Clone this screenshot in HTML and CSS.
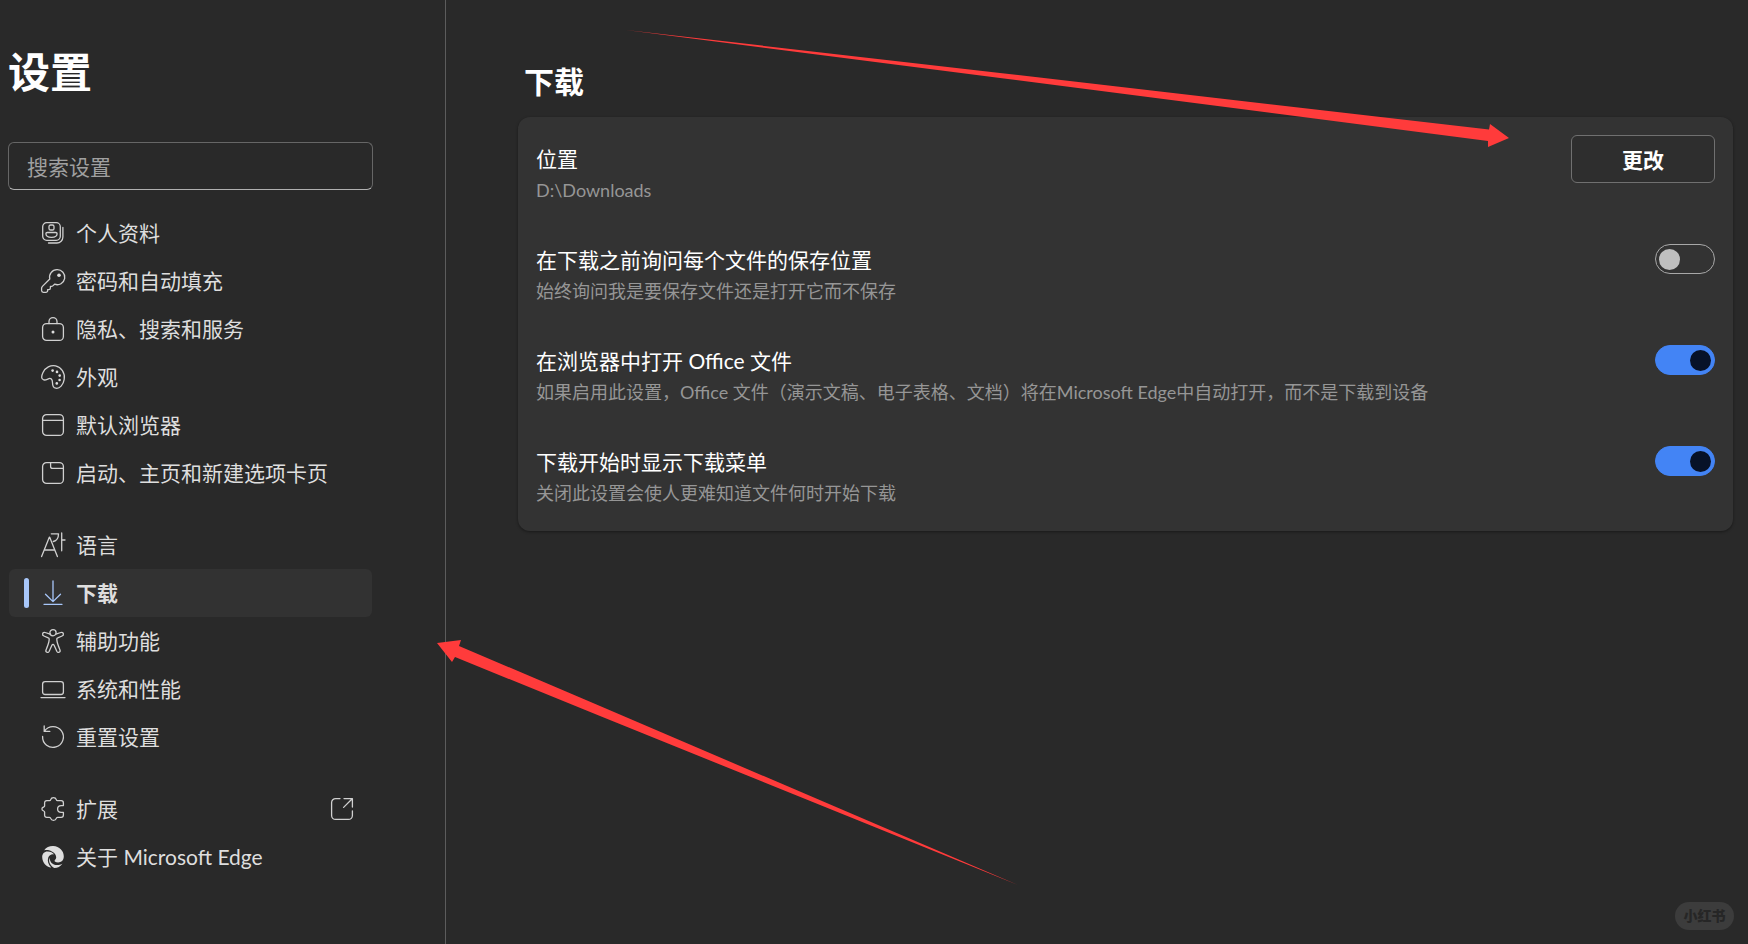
FILE: index.html
```html
<!DOCTYPE html>
<html lang="zh-CN">
<head>
  <meta charset="UTF-8" />
  <meta name="viewport" content="width=device-width, initial-scale=1.0" />
  <title>设置</title>
  <link rel="stylesheet" href="styles.css">
</head>
<body>
  <div class="layout">
    <aside class="sidebar">
      <h1>设置</h1>
      <input class="search" type="search" placeholder="搜索设置" aria-label="搜索设置" />

      <nav class="menu">
        <div class="menu-group">
          <a class="menu-item" href="#">
            <svg class="icon" viewBox="0 0 24 24"><rect x="1.7" y="1.7" width="17.6" height="17.6" rx="4"/><rect x="8" y="4" width="5" height="5" rx="1.6"/><path d="M6.2 11.5h8.6a1.3 1.3 0 0 1 1.3 1.3c0 2-2.2 3.500-5.600 3.500s-5.600-1.500-5.600-3.500a1.300 1.300 0 0 1 1.300-1.300z"/><path d="M21.900 6.500v9.500a6 6 0 0 1-6 6H7.500"/></svg>
            <span>个人资料</span>
          </a>
          <a class="menu-item" href="#">
            <svg class="icon" viewBox="0 0 24 24"><path d="M16 .7a7.400 7.400 0 0 0-7.200 9.300L1.400 17.400a2.500 2.500 0 0 0-.8 1.800v2.300c0 1 .8 1.800 1.800 1.800h2.500c1 0 1.700-.7 1.700-1.600v-1.100h1.200c.9 0 1.600-.7 1.600-1.600v-1.600h1.200c.5 0 .9-.2 1.200-.5l1.800-1.700A7.500 7.500 0 1 0 16 .7z"/><circle class="dot" cx="18" cy="6.200" r="1.800"/></svg>
            <span>密码和自动填充</span>
          </a>
          <a class="menu-item" href="#">
            <svg class="icon" viewBox="0 0 24 24"><rect x="1.600" y="6.600" width="20.800" height="16.800" rx="4"/><path d="M8 6.500V4.600a4 4 0 0 1 8 0v1.900"/><circle class="dot" cx="12" cy="15" r="1.500"/></svg>
            <span>隐私、搜索和服务</span>
          </a>
          <a class="menu-item" href="#">
            <svg class="icon" viewBox="0 0 24 24"><path d="M2 7.500C4.400 2.500 9.600-.1 14.600.9c5.600 1.200 9.700 7 8.600 13.400-.9 5.500-4.500 9.600-8.400 8.900-3.100-.5-3.300-3-3.300-5.500 0-3.300-1.600-5.200-4.200-3.900-1.700.8-2.800 1.500-4.600 1.100C-.1 14.300.3 10.900 2 7.500z"/><g class="dot"><circle cx="11.600" cy="5.600" r="1.300"/><circle cx="16" cy="6.900" r="1.300"/><circle cx="18.700" cy="10.600" r="1.300"/><circle cx="18.600" cy="15" r="1.300"/><circle cx="15.800" cy="18.400" r="1.300"/></g></svg>
            <span>外观</span>
          </a>
          <a class="menu-item" href="#">
            <svg class="icon" viewBox="0 0 24 24"><rect x="1.600" y="1.600" width="20.800" height="20.800" rx="4"/><path d="M1.600 7.400h20.800"/></svg>
            <span>默认浏览器</span>
          </a>
          <a class="menu-item" href="#">
            <svg class="icon" viewBox="0 0 24 24"><rect x="1.600" y="1.600" width="20.800" height="20.800" rx="4"/><path d="M9.600 1.600v3.800a2 2 0 0 0 2 2h10.800"/></svg>
            <span>启动、主页和新建选项卡页</span>
          </a>
        </div>

        <div class="menu-group">
          <a class="menu-item" href="#">
            <svg class="icon" viewBox="0 0 24 24"><path d="M.6 23.600 8.300 4.200h.4l7.700 19.400M3.300 17h10.400M10.300.8h7.200c0 4.600-1.500 7-5.200 7.700M20.700 0v17.800M20.700 7h3.300"/></svg>
            <span>语言</span>
          </a>
          <a class="menu-item active" href="#" aria-current="page">
            <svg class="icon" viewBox="0 0 24 24"><path d="M12 0v20.500M4.500 13.200l7.500 7.400 7.500-7.400M3 23.300h18"/></svg>
            <span>下载</span>
          </a>
          <a class="menu-item" href="#">
            <svg class="icon" viewBox="0 0 24 24"><circle cx="12" cy="3.700" r="3.100"/><path d="M9.200 5.200 4.100 3.500c-2.600-.8-3.500 2.600-1.200 3.500l4.400 1.800c.8.300 1 .8.900 1.600-.2 3.600-1.800 7.300-3.100 10.300-1.100 2.500 2 3.800 3.100 1.500l2.700-6c.5-1 1.700-1 2.200 0l2.700 6c1.100 2.300 4.200 1 3.100-1.500-1.300-3-2.900-6.700-3.100-10.300-.1-.8.100-1.300.9-1.600L21.100 7c2.300-.9 1.400-4.300-1.200-3.500l-5.100 1.700"/></svg>
            <span>辅助功能</span>
          </a>
          <a class="menu-item" href="#">
            <svg class="icon" viewBox="0 0 24 24"><rect x="1.600" y="4.700" width="20.800" height="12.800" rx="2.500"/><path d="M0 20.600h24"/></svg>
            <span>系统和性能</span>
          </a>
          <a class="menu-item" href="#">
            <svg class="icon" viewBox="0 0 24 24"><path d="M1.600 11.500A10.400 10.400 0 1 0 3.500 6M3.200 1v5.400h5.600"/></svg>
            <span>重置设置</span>
          </a>
        </div>

        <div class="menu-group">
          <a class="menu-item" href="#">
            <svg class="icon" viewBox="0 0 24 24"><path d="M5.800 3.700h2.700c.8 0 1-.4 1.200-1.100C10.100 1.300 11 .6 12.500.6s2.400.7 2.800 2c.2.700.5 1.100 1.200 1.100h3.700c1.400 0 2.200.8 2.200 2.200v2.700h-2.200c-2.200 0-3.600 1.400-3.600 3.400s1.400 3.400 3.600 3.400h2.200v2.700c0 1.400-.8 2.200-2.200 2.200h-3.700c-.7 0-1 .4-1.200 1.100-.4 1.300-1.300 2-2.800 2s-2.400-.7-2.800-2c-.2-.7-.4-1.100-1.200-1.100H5.800c-1.400 0-2.200-.8-2.200-2.200v-3c0-.7-.3-.9-.9-1.100C1.400 13.600.9 13 .9 12s.5-1.700 1.800-2c.6-.2.900-.5.900-1.100v-3c0-1.400.8-2.200 2.200-2.200z"/></svg>
            <span>扩展</span>
            <svg class="icon external" viewBox="0 0 24 24"><path d="M10 1.600H5.600a4 4 0 0 0-4 4v12.800a4 4 0 0 0 4 4h12.800a4 4 0 0 0 4-4V14M14 1.600h8.400V10M22.200 1.800l-8.600 8.600"/></svg>
          </a>
          <a class="menu-item" href="#">
            <svg class="icon solid" viewBox="0 0 24 24"><path d="M3.200 5.300C5.400 2.300 8.700.9 12.300 1.100 18.400 1.300 22.700 5.900 22.800 11.300c0 4.100-2.500 6.200-5.700 6.200-2.500 0-3.900-1.100-3.500-2 .3-.7 1.600-1.200 1.600-3.200 0-3.100-2.900-6-7.200-7.100-1.800-.5-3.400-.3-4.800.1z"/><path d="M1.200 12.200C1 8.700 3.600 6.300 6.800 6.500c2.600.1 5 1.200 6.400 2.900-2.700-.7-5.100.9-6 3.400-1.100 3.200.2 7 3 9.800C5.300 21.800 1.400 17.700 1.200 12.200z"/><path d="M8.900 12.700c-.5 4 2.600 7.400 7.200 7.400 2.100 0 3.900-.5 5.300-1.400-1.900 2.800-4.800 4.200-8.100 4.300-3.300-1.500-6.800-6.800-4.400-10.300z"/></svg>
            <span>关于 Microsoft Edge</span>
          </a>
        </div>
      </nav>
    </aside>

    <main class="content">
      <h2>下载</h2>
      <section class="card">
        <div class="row">
          <div class="text">
            <span class="name">位置</span>
            <span class="desc">D:\Downloads</span>
          </div>
          <button class="change" type="button">更改</button>
        </div>
        <div class="row">
          <div class="text">
            <label class="name" for="askLocation">在下载之前询问每个文件的保存位置</label>
            <span class="desc">始终询问我是要保存文件还是打开它而不保存</span>
          </div>
          <input class="toggle" type="checkbox" id="askLocation" />
        </div>
        <div class="row">
          <div class="text">
            <label class="name" for="openOffice">在浏览器中打开 Office 文件</label>
            <span class="desc">如果启用此设置，Office 文件（演示文稿、电子表格、文档）将在Microsoft Edge中自动打开，而不是下载到设备</span>
          </div>
          <input class="toggle" type="checkbox" id="openOffice" checked />
        </div>
        <div class="row">
          <div class="text">
            <label class="name" for="showMenu">下载开始时显示下载菜单</label>
            <span class="desc">关闭此设置会使人更难知道文件何时开始下载</span>
          </div>
          <input class="toggle" type="checkbox" id="showMenu" checked />
        </div>
      </section>
    </main>
  </div>

  <svg class="arrows" width="1748" height="944" viewBox="0 0 1748 944" aria-hidden="true">
    <path d="M626 30 1000 73 1489 129.500 1490 124 1509 138 1488 147 1488 141 1000 78z"/>
    <path d="M1018 885 600 706 459 646 461 640 437 643 452 662 455 657 600 716z"/>
  </svg>
  <div class="watermark">小红书</div>
</body>
</html>
```

FILE: styles.css
```css
* {
  box-sizing: border-box;
}

body {
  margin: 0;
  background-color: #292929;
  color: #fff;
  font-family: Lato, 'Noto Sans CJK SC', sans-serif;
  font-size: 21px;
}

.layout {
  display: flex;
  min-height: 100vh;
}

/* Sidebar */
.sidebar {
  flex: none;
  width: 446px;
  padding: 42px 72px 0 8px;
  border-right: 1px solid #5c5c5c;
}

h1 {
  margin: 0 0 40px;
  font-size: 42px;
  line-height: 60px;
}

.search {
  display: block;
  width: 100%;
  height: 48px;
  padding: 0 18px;
  border: 1px solid #666;
  border-bottom-color: #b0b0b0;
  border-radius: 6px;
  background: transparent;
  color: #fff;
  font: inherit;
}

.search::placeholder {
  color: #a0a0a0;
}

.menu {
  display: flex;
  flex-direction: column;
  gap: 24px;
  margin: 19px 1px 0;
}

.menu-item {
  position: relative;
  display: flex;
  align-items: center;
  gap: 11px;
  height: 48px;
  padding: 0 18px 0 32px;
  border-radius: 6px;
  color: #dedede;
  line-height: 48px;
  text-decoration: none;
}

.menu-item.active {
  background: #323232;
  font-weight: bold;
}

.menu-item.active::before {
  content: "";
  position: absolute;
  left: 15px;
  top: 9px;
  width: 5px;
  height: 30px;
  border-radius: 3px;
  background: #a8c7fa;
}

.icon {
  flex: none;
  width: 24px;
  height: 24px;
  overflow: visible;
  fill: none;
  stroke: #d0d0d0;
  stroke-width: 1.3;
  stroke-linecap: round;
  stroke-linejoin: round;
}

.icon .dot,
.icon.solid {
  fill: #dedede;
  stroke: none;
}

.active .icon {
  stroke: #a8c7fa;
}

.external {
  margin-left: auto;
}

/* Content */
.content {
  flex: 1;
  padding: 59px 15px 0 72px;
}

h2 {
  margin: 0 0 14px;
  padding-left: 6px;
  font-size: 30px;
  line-height: 44px;
}

.card {
  display: flex;
  flex-direction: column;
  gap: 31px;
  padding: 18px 18px 23px;
  border-radius: 12px;
  background: #333;
  box-shadow: 0 1px 3px rgba(0, 0, 0, 0.4);
}

.row {
  display: flex;
  justify-content: space-between;
  align-items: flex-start;
  gap: 24px;
}

.text {
  display: flex;
  flex-direction: column;
  padding-top: 8px;
}

.name {
  line-height: 32px;
}

.desc {
  color: #969696;
  font-size: 18px;
  line-height: 30px;
}

.change {
  width: 144px;
  height: 48px;
  border: 1px solid #707070;
  border-radius: 6px;
  background: #2e2e2e;
  color: #fff;
  font: inherit;
  font-weight: bold;
}

.toggle {
  appearance: none;
  flex: none;
  display: flex;
  align-items: center;
  width: 60px;
  height: 30px;
  margin: 8px 0 0;
  padding: 0 3px;
  border: 1px solid #a8a8a8;
  border-radius: 15px;
}

.toggle::before {
  content: "";
  width: 21px;
  height: 21px;
  border-radius: 50%;
  background: #bfbfbf;
}

.toggle:checked {
  justify-content: flex-end;
  border-color: #4384f5;
  background: #4384f5;
}

.toggle:checked::before {
  background: #071228;
}

.arrows {
  position: absolute;
  left: 0;
  top: 0;
  fill: #ff3b3b;
  pointer-events: none;
}

.watermark {
  position: fixed;
  right: 14px;
  bottom: 14px;
  width: 59px;
  border-radius: 14px;
  background: #3c3c3c;
  color: #262626;
  font-size: 14px;
  font-weight: 900;
  line-height: 28px;
  text-align: center;
}
```
